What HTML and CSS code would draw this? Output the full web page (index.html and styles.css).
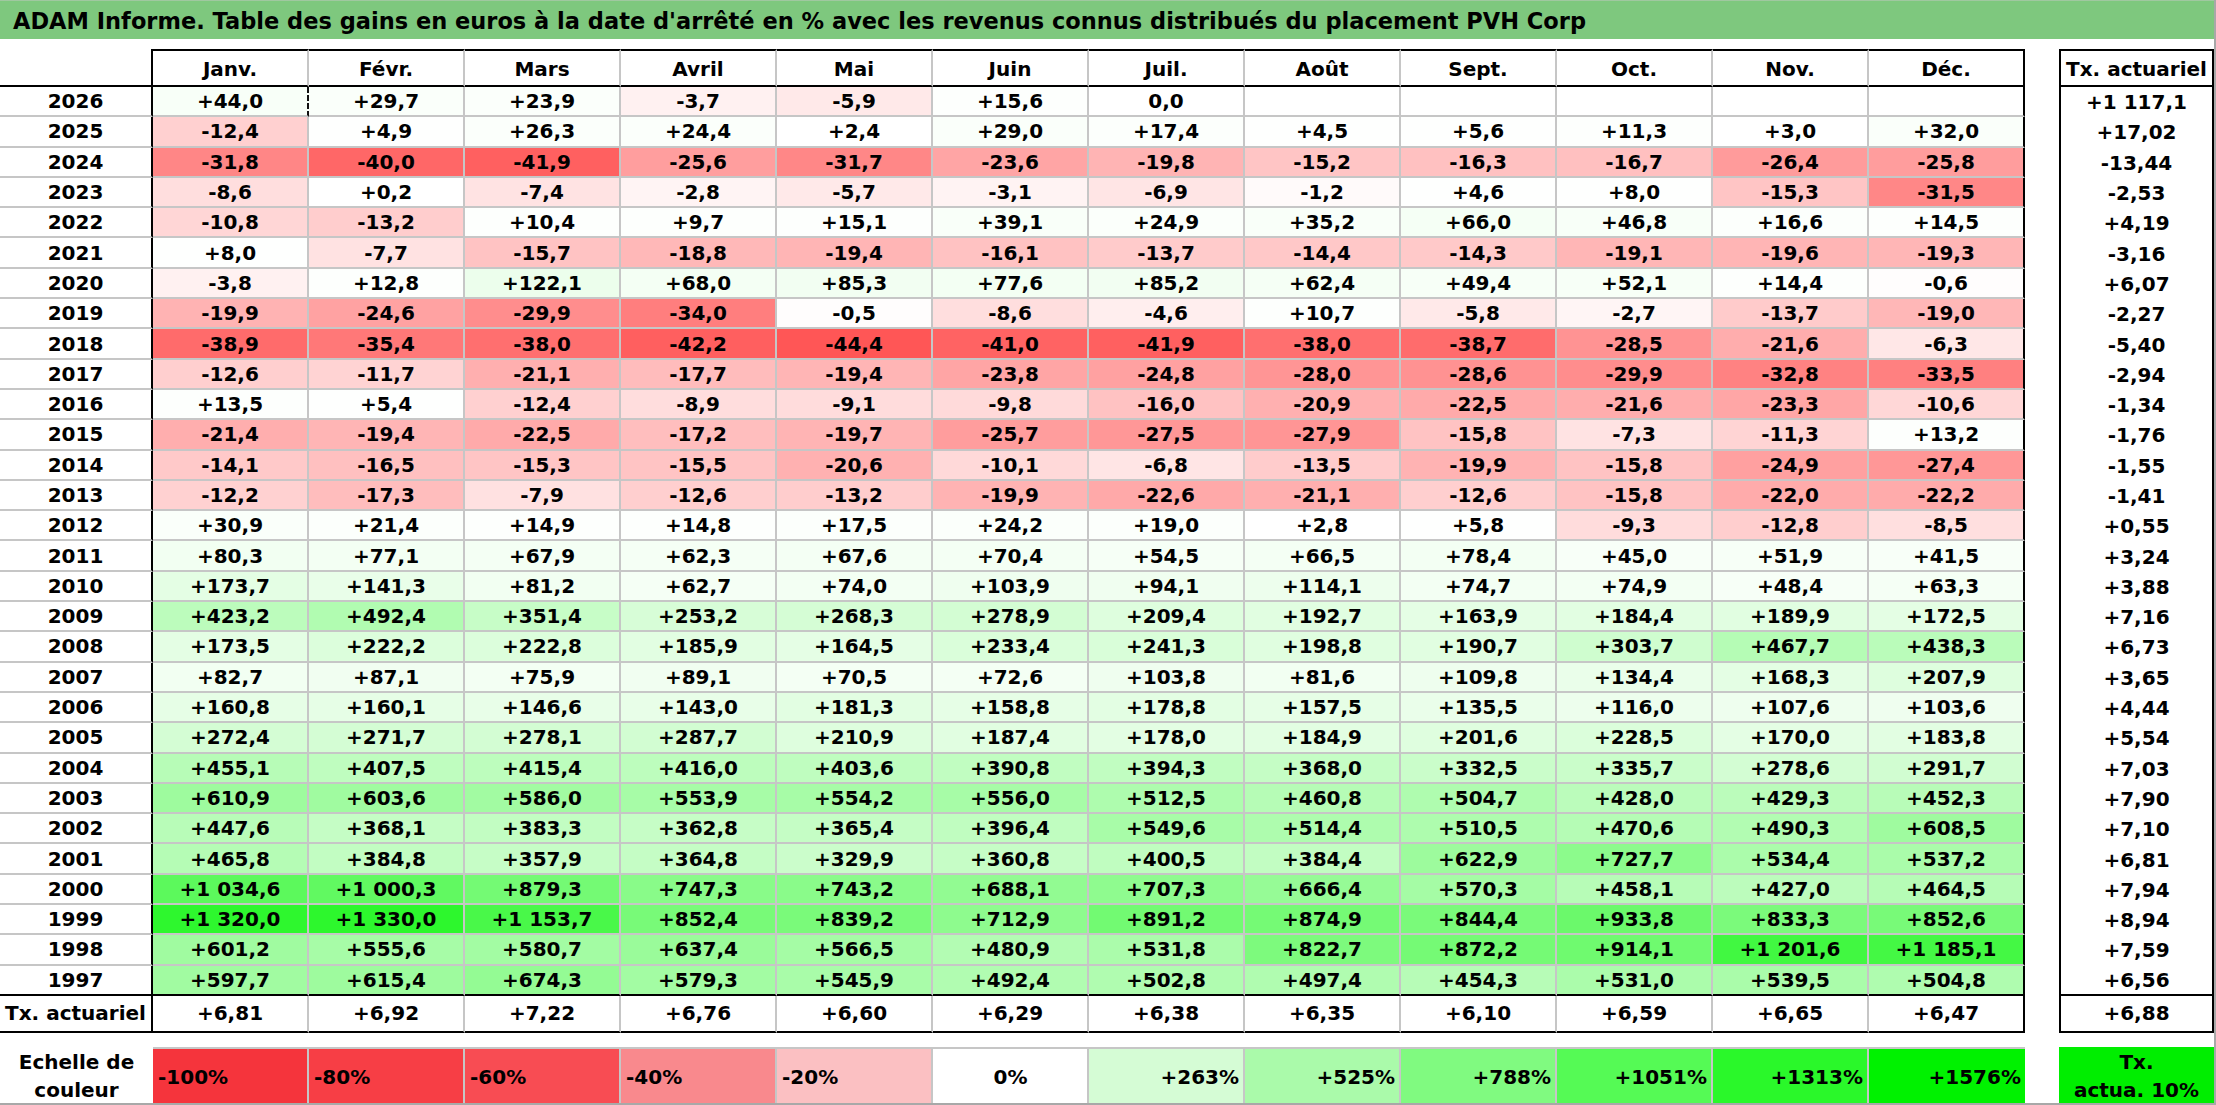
FILE: index.html
```html
<!DOCTYPE html>
<html lang="fr">
<head>
<meta charset="utf-8">
<title>ADAM Informe - PVH Corp</title>
<link rel="stylesheet" href="styles.css">
</head>
<body>
<div class="sheet">
  <div class="title">ADAM Informe. Table des gains en euros à la date d'arrêté en % avec les revenus connus distribués du placement PVH Corp</div>
  <div class="tables">
    <div class="main" id="main"></div>
    <div class="side" id="side"></div>
  </div>
  <div class="scale">
    <div class="scale-label">Echelle de<br>couleur</div>
    <div class="sc-cell left s-m100">-100%</div>
    <div class="sc-cell left s-m80">-80%</div>
    <div class="sc-cell left s-m60">-60%</div>
    <div class="sc-cell left s-m40">-40%</div>
    <div class="sc-cell left s-m20">-20%</div>
    <div class="sc-cell center s-0">0%</div>
    <div class="sc-cell right s-p1">+263%</div>
    <div class="sc-cell right s-p2">+525%</div>
    <div class="sc-cell right s-p3">+788%</div>
    <div class="sc-cell right s-p4">+1051%</div>
    <div class="sc-cell right s-p5">+1313%</div>
    <div class="sc-cell right s-p6 last">+1576%</div>
    <div class="scale-tx">Tx.<br>actua. 10%</div>
  </div>
</div>
<script src="script.js"></script>
</body>
</html>
```

FILE: styles.css
```css
html, body {
  margin: 0;
  padding: 0;
  background: #ffffff;
}
body {
  font-family: "DejaVu Sans", "Liberation Sans", sans-serif;
  font-weight: bold;
  color: #000;
}
.sheet {
  width: 2214px;
  height: 1103px;
  border-right: 2px solid #a8a8a8;
  border-bottom: 2px solid #a8a8a8;
  overflow: hidden;
}
.title {
  height: 36px;
  border-top: 1px solid #a0c8a0;
  background: #7ec87e;
  font-size: 22.5px;
  line-height: 36px;
  padding-left: 13px;
  padding-top: 2px;
  box-sizing: content-box;
  white-space: nowrap;
}
.tables {
  display: flex;
  margin-top: 10px;
}
.main {
  display: grid;
  grid-template-columns: 153px repeat(12, 156px);
  grid-template-rows: 38px repeat(30, 30.3px) 37px;
  width: 2025px;
}
.side {
  display: grid;
  grid-template-columns: 155px;
  grid-template-rows: 38px repeat(30, 30.3px) 37px;
  margin-left: 34px;
}
.cell {
  box-sizing: border-box;
  display: flex;
  align-items: center;
  justify-content: center;
  font-size: 20px;
  white-space: nowrap;
  border-right: 2px solid #c6c6c6;
  border-bottom: 2px solid #c6c6c6;
  background: #fff;
}
.cell.corner {
  border-right: 2px solid #000;
  border-bottom: 2px solid #000;
}
.cell.hd {
  border-top: 2px solid #000;
  border-bottom: 2px solid #000;
  padding-top: 2px;
}
.cell.yr {
  border-right: 2px solid #000;
}
.cell.dec {
  border-right: 2px solid #000;
}
.cell.lastrow {
  border-bottom: 2px solid #000;
}
.cell.txrow {
  border-bottom: 2px solid #000;
}
.cell.dash {
  border-right: 2px dashed #111;
}
.side .cell {
  border-left: 2px solid #000;
  border-right: 2px solid #000;
  border-bottom: 0;
}
.side .cell.hd {
  border-bottom: 2px solid #000;
}
.side .cell.lastrow,
.side .cell.txrow {
  border-bottom: 2px solid #000;
}
.scale {
  display: grid;
  grid-template-columns: 153px repeat(12, 156px) 155px;
  grid-template-rows: 56px;
  margin-top: 14px;
}
.scale-label {
  display: flex;
  align-items: center;
  justify-content: center;
  text-align: center;
  font-size: 20px;
  line-height: 28px;
  padding-top: 2px;
}
.sc-cell {
  box-sizing: border-box;
  display: flex;
  align-items: center;
  font-size: 20px;
  border-top: 2px solid #c6c6c6;
  border-right: 2px solid #c6c6c6;
  padding: 2px 4px 0 5px;
}
.sc-cell.left { justify-content: flex-start; }
.sc-cell.center { justify-content: center; }
.sc-cell.right { justify-content: flex-end; }
.sc-cell.last { border-right: 0; }
.s-m100 { background: #f5343c; }
.s-m80 { background: #f73e45; }
.s-m60 { background: #f84c53; }
.s-m40 { background: #f9898d; }
.s-m20 { background: #fbc0c2; }
.s-0 { background: #ffffff; }
.s-p1 { background: #d5fcd5; }
.s-p2 { background: #aafaaa; }
.s-p3 { background: #80fa80; }
.s-p4 { background: #55fa55; }
.s-p5 { background: #2af82a; }
.s-p6 { background: #00f200; }
.scale-tx {
  margin-left: 34px;
  width: 155px;
  background: #00ee00;
  display: flex;
  align-items: center;
  justify-content: center;
  text-align: center;
  font-size: 20px;
  line-height: 28px;
  padding-top: 2px;
  box-sizing: border-box;
}
```

FILE: script.js
```js
(function () {
  var months = ["Janv.", "Févr.", "Mars", "Avril", "Mai", "Juin", "Juil.", "Août", "Sept.", "Oct.", "Nov.", "Déc."];
  var rows = [
    ["2026", "+44,0 +29,7 +23,9 -3,7 -5,9 +15,6 0,0", "+1_117,1"],
    ["2025", "-12,4 +4,9 +26,3 +24,4 +2,4 +29,0 +17,4 +4,5 +5,6 +11,3 +3,0 +32,0", "+17,02"],
    ["2024", "-31,8 -40,0 -41,9 -25,6 -31,7 -23,6 -19,8 -15,2 -16,3 -16,7 -26,4 -25,8", "-13,44"],
    ["2023", "-8,6 +0,2 -7,4 -2,8 -5,7 -3,1 -6,9 -1,2 +4,6 +8,0 -15,3 -31,5", "-2,53"],
    ["2022", "-10,8 -13,2 +10,4 +9,7 +15,1 +39,1 +24,9 +35,2 +66,0 +46,8 +16,6 +14,5", "+4,19"],
    ["2021", "+8,0 -7,7 -15,7 -18,8 -19,4 -16,1 -13,7 -14,4 -14,3 -19,1 -19,6 -19,3", "-3,16"],
    ["2020", "-3,8 +12,8 +122,1 +68,0 +85,3 +77,6 +85,2 +62,4 +49,4 +52,1 +14,4 -0,6", "+6,07"],
    ["2019", "-19,9 -24,6 -29,9 -34,0 -0,5 -8,6 -4,6 +10,7 -5,8 -2,7 -13,7 -19,0", "-2,27"],
    ["2018", "-38,9 -35,4 -38,0 -42,2 -44,4 -41,0 -41,9 -38,0 -38,7 -28,5 -21,6 -6,3", "-5,40"],
    ["2017", "-12,6 -11,7 -21,1 -17,7 -19,4 -23,8 -24,8 -28,0 -28,6 -29,9 -32,8 -33,5", "-2,94"],
    ["2016", "+13,5 +5,4 -12,4 -8,9 -9,1 -9,8 -16,0 -20,9 -22,5 -21,6 -23,3 -10,6", "-1,34"],
    ["2015", "-21,4 -19,4 -22,5 -17,2 -19,7 -25,7 -27,5 -27,9 -15,8 -7,3 -11,3 +13,2", "-1,76"],
    ["2014", "-14,1 -16,5 -15,3 -15,5 -20,6 -10,1 -6,8 -13,5 -19,9 -15,8 -24,9 -27,4", "-1,55"],
    ["2013", "-12,2 -17,3 -7,9 -12,6 -13,2 -19,9 -22,6 -21,1 -12,6 -15,8 -22,0 -22,2", "-1,41"],
    ["2012", "+30,9 +21,4 +14,9 +14,8 +17,5 +24,2 +19,0 +2,8 +5,8 -9,3 -12,8 -8,5", "+0,55"],
    ["2011", "+80,3 +77,1 +67,9 +62,3 +67,6 +70,4 +54,5 +66,5 +78,4 +45,0 +51,9 +41,5", "+3,24"],
    ["2010", "+173,7 +141,3 +81,2 +62,7 +74,0 +103,9 +94,1 +114,1 +74,7 +74,9 +48,4 +63,3", "+3,88"],
    ["2009", "+423,2 +492,4 +351,4 +253,2 +268,3 +278,9 +209,4 +192,7 +163,9 +184,4 +189,9 +172,5", "+7,16"],
    ["2008", "+173,5 +222,2 +222,8 +185,9 +164,5 +233,4 +241,3 +198,8 +190,7 +303,7 +467,7 +438,3", "+6,73"],
    ["2007", "+82,7 +87,1 +75,9 +89,1 +70,5 +72,6 +103,8 +81,6 +109,8 +134,4 +168,3 +207,9", "+3,65"],
    ["2006", "+160,8 +160,1 +146,6 +143,0 +181,3 +158,8 +178,8 +157,5 +135,5 +116,0 +107,6 +103,6", "+4,44"],
    ["2005", "+272,4 +271,7 +278,1 +287,7 +210,9 +187,4 +178,0 +184,9 +201,6 +228,5 +170,0 +183,8", "+5,54"],
    ["2004", "+455,1 +407,5 +415,4 +416,0 +403,6 +390,8 +394,3 +368,0 +332,5 +335,7 +278,6 +291,7", "+7,03"],
    ["2003", "+610,9 +603,6 +586,0 +553,9 +554,2 +556,0 +512,5 +460,8 +504,7 +428,0 +429,3 +452,3", "+7,90"],
    ["2002", "+447,6 +368,1 +383,3 +362,8 +365,4 +396,4 +549,6 +514,4 +510,5 +470,6 +490,3 +608,5", "+7,10"],
    ["2001", "+465,8 +384,8 +357,9 +364,8 +329,9 +360,8 +400,5 +384,4 +622,9 +727,7 +534,4 +537,2", "+6,81"],
    ["2000", "+1_034,6 +1_000,3 +879,3 +747,3 +743,2 +688,1 +707,3 +666,4 +570,3 +458,1 +427,0 +464,5", "+7,94"],
    ["1999", "+1_320,0 +1_330,0 +1_153,7 +852,4 +839,2 +712,9 +891,2 +874,9 +844,4 +933,8 +833,3 +852,6", "+8,94"],
    ["1998", "+601,2 +555,6 +580,7 +637,4 +566,5 +480,9 +531,8 +822,7 +872,2 +914,1 +1_201,6 +1_185,1", "+7,59"],
    ["1997", "+597,7 +615,4 +674,3 +579,3 +545,9 +492,4 +502,8 +497,4 +454,3 +531,0 +539,5 +504,8", "+6,56"]
  ];
  var txRow = ["+6,81", "+6,92", "+7,22", "+6,76", "+6,60", "+6,29", "+6,38", "+6,35", "+6,10", "+6,59", "+6,65", "+6,47"];
  var txAll = "+6,88";

  function txt(s) { return s.replace(/_/g, "\u00a0"); }
  function num(s) { return parseFloat(s.replace(/_/g, "").replace(",", ".")); }
  function bg(v) {
    if (v < 0) {
      var c = Math.max(40, Math.round(255 - 3.8 * (-v)));
      return "rgb(255," + c + "," + c + ")";
    }
    if (v > 0) {
      var d = Math.max(0, Math.round(255 - 0.158 * v));
      var g = Math.round(255 - 0.006 * v);
      return "rgb(" + d + "," + g + "," + d + ")";
    }
    return "#ffffff";
  }

  var main = document.getElementById("main");
  var side = document.getElementById("side");

  function cell(parent, cls, text) {
    var d = document.createElement("div");
    d.className = "cell " + cls;
    if (text !== undefined) d.textContent = text;
    parent.appendChild(d);
    return d;
  }

  cell(main, "corner", "");
  months.forEach(function (m, i) {
    cell(main, "hd" + (i === 11 ? " dec" : ""), m);
  });
  cell(side, "hd", "Tx. actuariel");

  rows.forEach(function (r, ri) {
    var last = ri === rows.length - 1 ? " lastrow" : "";
    cell(main, "yr" + last, r[0]);
    var vals = r[1].split(" ");
    for (var i = 0; i < 12; i++) {
      var cls = "c" + last + (i === 11 ? " dec" : "") + (ri === 0 && i === 0 ? " dash" : "");
      var s = vals[i];
      var d = cell(main, cls, s ? txt(s) : "");
      if (s) d.style.background = bg(num(s));
    }
    cell(side, "c" + last, txt(r[2]));
  });

  cell(main, "yr txrow", "Tx. actuariel");
  txRow.forEach(function (t, i) {
    cell(main, "c txrow" + (i === 11 ? " dec" : ""), t);
  });
  cell(side, "c txrow", txAll);
})();
```
